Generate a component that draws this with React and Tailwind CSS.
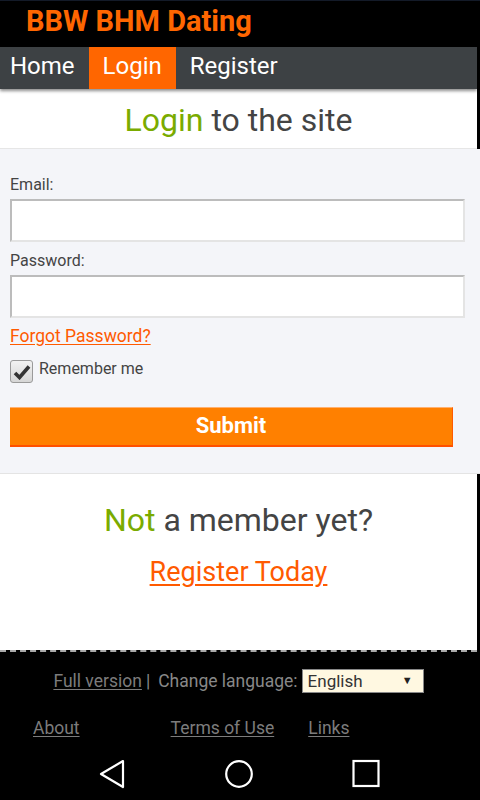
import React from 'react'

function CheckBox() {
  return (
    <div className="w-[23px] h-[23px] shrink-0 rounded-[3px] border border-[#9a9a9a] bg-gradient-to-b from-[#f2f2f2] to-[#d6d6d6] flex items-center justify-center">
      <svg width="18" height="16" viewBox="0 0 18 16">
        <path d="M2 9 L6.5 13.5 L16 2.5" fill="none" stroke="#333" strokeWidth="3.6" strokeLinejoin="miter" />
      </svg>
    </div>
  )
}

export default function App() {
  return (
    <div className="w-[480px] h-[800px] overflow-hidden bg-black font-['Roboto',sans-serif]">
      {/* Header */}
      <div className="h-[47px] border-t border-[#131a28] bg-black">
        <div className="pl-[26px] text-[29px] leading-[40px] font-bold text-[#ff6600]">BBW BHM Dating</div>
      </div>

      <div className="w-[477px]">
        {/* Nav */}
        <div className="relative z-10 flex h-[42px] bg-[#3d4144] text-white text-[24px] shadow-[0_2px_3px_rgba(0,0,0,0.45)]">
          <div className="pl-[10px] pr-[14px] leading-[38px]">Home</div>
          <div className="px-[14px] leading-[38px] bg-[#ff6600]">Login</div>
          <div className="px-[14px] leading-[38px]">Register</div>
        </div>

        {/* Title */}
        <div className="h-[60px] bg-white border-b border-[#e6e6e6] pt-[4px] text-center text-[32px] leading-[55px] text-[#444]">
          <span className="text-[#7aab00]">Login</span> to the site
        </div>

        {/* Form */}
        <div className="w-[480px] bg-[#f4f5f9] border-b border-[#e4e4e4] pt-[26px] pb-[26px] pl-[10px] text-[#444]">
          <div className="text-[16px] leading-[20px] mb-[4px]">Email:</div>
          <div className="w-[455px] h-[43px] bg-white border-2 border-t-[#bcbcbc] border-l-[#bcbcbc] border-b-[#e4e4e4] border-r-[#e4e4e4]" />
          <div className="text-[16px] leading-[20px] mt-[9px] mb-[4px]">Password:</div>
          <div className="w-[455px] h-[43px] bg-white border-2 border-t-[#bcbcbc] border-l-[#bcbcbc] border-b-[#e4e4e4] border-r-[#e4e4e4]" />
          <div className="mt-[8px] text-[17.5px] leading-[20px] text-[#ff5a00] underline underline-offset-2">Forgot Password?</div>
          <div className="mt-[14px] flex items-start">
            <CheckBox />
            <div className="ml-[6px] -mt-[1px] text-[16px] leading-[20px]">Remember me</div>
          </div>
          <div className="mt-[24px] w-[443px] h-[40px] bg-[#ff8000] border-t border-t-[#ffb070] border-r border-r-[#ff5a00] border-b-2 border-b-[#ff5000] text-center text-white font-bold text-[22px] leading-[35px]">
            Submit
          </div>
        </div>

        {/* Register */}
        <div className="h-[178px] bg-white bg-clip-padding border-b-2 border-dashed border-[#aaa] pt-[26px] text-center">
          <div className="text-[32px] leading-[40px] text-[#444]">
            <span className="text-[#7aab00]">Not</span> a member yet?
          </div>
          <div className="mt-[16px] text-[27px] leading-[32px] text-[#ff5a00] underline underline-offset-[3px]">Register Today</div>
        </div>

        {/* Footer */}
        <div className="h-[96px] pt-[17px] text-[17.5px] text-[#888]">
          <div className="flex justify-center items-center h-[24px] leading-[24px]">
            <span className="underline underline-offset-2 text-[#7c7c7c]">Full version</span>
            <span className="ml-[4px]">|</span>
            <span className="ml-[8px]">Change language:</span>
            <div className="ml-[4px] w-[122px] h-[24px] bg-[#fff8e1] border border-[#888] flex items-center justify-between pl-[5px] pr-[10px] text-[#333]">
              <span className="text-[17px] leading-[22px]">English</span>
              <span className="text-[11px] leading-[22px] text-[#222]">▼</span>
            </div>
          </div>
          <div className="mt-[25px] flex leading-[20px] text-[#7c7c7c]">
            <span className="ml-[33px] underline underline-offset-2">About</span>
            <span className="ml-[91px] underline underline-offset-2">Terms of Use</span>
            <span className="ml-[34px] underline underline-offset-2">Links</span>
          </div>
        </div>
      </div>

      {/* Android navigation */}
      <div className="h-[52px] flex items-center pl-[98px] gap-[99px]">
        <svg width="28" height="30" viewBox="0 0 28 30">
          <path d="M25 2 L3 15 L25 28 Z" fill="none" stroke="#fff" strokeWidth="2.2" strokeLinejoin="round" />
        </svg>
        <svg width="28" height="30" viewBox="0 0 28 30">
          <circle cx="14" cy="15" r="12.8" fill="none" stroke="#fff" strokeWidth="2.2" />
        </svg>
        <svg width="28" height="30" viewBox="0 0 28 30">
          <rect x="1.5" y="2" width="25" height="25" fill="none" stroke="#fff" strokeWidth="2.2" />
        </svg>
      </div>
    </div>
  )
}
